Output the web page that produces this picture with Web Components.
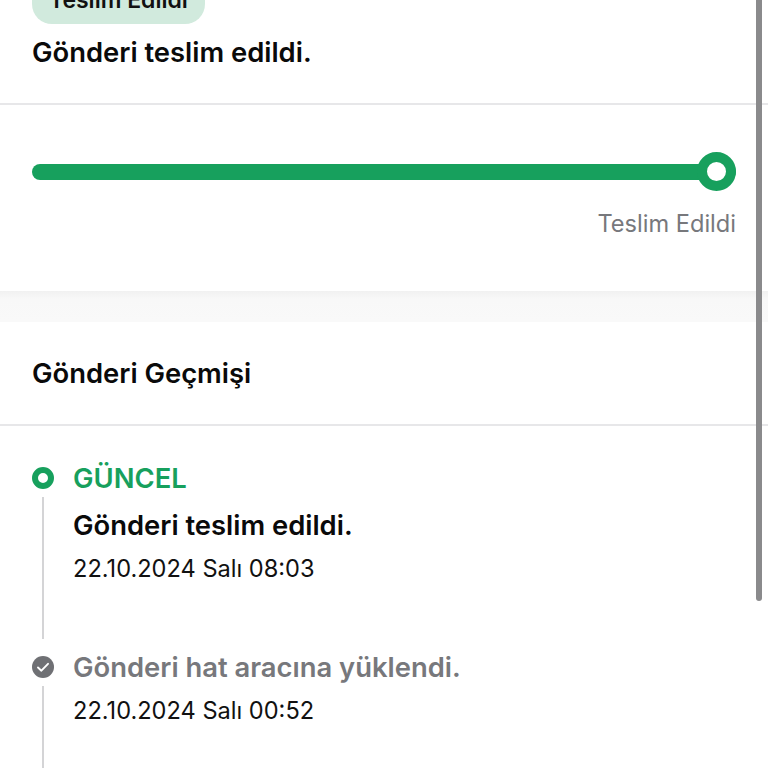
<!DOCTYPE html>
<html lang="tr">
<head>
<meta charset="utf-8">
<title>Gönderi Takip</title>
<style>
  html, body { margin: 0; height: 768px; overflow: hidden; background: #fff; font-family: Inter, "Liberation Sans", sans-serif; }
</style>
</head>
<body>
<tracking-page>
  <status-summary status="Teslim Edildi" message="Gönderi teslim edildi."></status-summary>
  <progress-track label="Teslim Edildi"></progress-track>
  <history-panel title="Gönderi Geçmişi">
    <history-item current label="GÜNCEL" title="Gönderi teslim edildi." date="22.10.2024 Salı 08:03"></history-item>
    <history-item title="Gönderi hat aracına yüklendi." date="22.10.2024 Salı 00:52"></history-item>
  </history-panel>
</tracking-page>

<script>
class TrackingPage extends HTMLElement {
  constructor() {
    super()
    this.attachShadow({ mode: 'open' })
  }
  connectedCallback() {
    this.shadowRoot.innerHTML = `
      <style>
        :host { display: block; position: relative; height: 768px; overflow: hidden; }
        .content { display: flex; flex-direction: column; margin-top: -24px; }
        .scrollbar { position: absolute; top: 0; right: 6px; width: 6px; height: 601px; background: #8a8a8c; border-radius: 0 0 3px 3px; }
      </style>
      <div class="content"><slot></slot></div>
      <div class="scrollbar"></div>
    `
  }
}

class StatusSummary extends HTMLElement {
  constructor() {
    super()
    this.attachShadow({ mode: 'open' })
  }
  connectedCallback() {
    this.shadowRoot.innerHTML = `
      <style>
        :host { display: block; padding: 0 32px 33px; border-bottom: 2px solid #e7e7e9; }
        .badge { display: inline-block; height: 48px; line-height: 48px; padding: 0 17px; box-sizing: border-box; background: #d1eadd; border-radius: 0 0 20px 20px; font-size: 23px; font-weight: 600; color: #111; }
        .head { height: 48px; }
        .message { margin-top: 10px; font-size: 27.4px; line-height: 36px; font-weight: 600; color: #0a0a0a; }
      </style>
      <div class="head"><span class="badge">${this.getAttribute('status')}</span></div>
      <div class="message">${this.getAttribute('message')}</div>
    `
  }
}

class ProgressTrack extends HTMLElement {
  constructor() {
    super()
    this.attachShadow({ mode: 'open' })
  }
  connectedCallback() {
    this.shadowRoot.innerHTML = `
      <style>
        :host { display: block; height: 186px; box-sizing: border-box; padding: 59px 32px 0; }
        .bar { position: relative; height: 16px; background: #17a05d; border-radius: 8px; }
        .knob { position: absolute; right: 0; top: -12px; width: 39px; height: 39px; box-sizing: border-box; border: 10px solid #17a05d; border-radius: 50%; background: #fff; }
        .label { margin-top: 29px; text-align: right; font-size: 23.6px; line-height: 30px; color: #77787c; }
      </style>
      <div class="bar"><div class="knob"></div></div>
      <div class="label">${this.getAttribute('label')}</div>
    `
  }
}

class HistoryPanel extends HTMLElement {
  constructor() {
    super()
    this.attachShadow({ mode: 'open' })
  }
  connectedCallback() {
    this.shadowRoot.innerHTML = `
      <style>
        :host { display: block; }
        .gap { height: 31px; background: linear-gradient(#f1f1f1, #f8f8f8 8px, #f9f9f9); }
        h2 { margin: 0; height: 104px; box-sizing: border-box; padding: 0 32px; display: flex; align-items: center; border-bottom: 2px solid #e7e7e9; font-size: 27.4px; font-weight: 600; color: #0a0a0a; }
        .list { padding: 37px 32px 0; display: flex; flex-direction: column; }
      </style>
      <div class="gap"></div>
      <h2>${this.getAttribute('title')}</h2>
      <div class="list"><slot></slot></div>
    `
  }
}

class HistoryItem extends HTMLElement {
  constructor() {
    super()
    this.attachShadow({ mode: 'open' })
  }
  connectedCallback() {
    const current = this.hasAttribute('current')
    const icon = current
      ? `<svg width="22" height="22" viewBox="0 0 22 22"><circle cx="11" cy="11" r="8" fill="#fff" stroke="#17a05d" stroke-width="6"/></svg>`
      : `<svg width="22" height="22" viewBox="0 0 22 22"><circle cx="11" cy="11" r="11" fill="#6f7074"/><path d="M6 11.5l3.4 3.2L16 7.8" fill="none" stroke="#fff" stroke-width="1.9" stroke-linecap="round" stroke-linejoin="round"/></svg>`
    this.shadowRoot.innerHTML = `
      <style>
        :host { display: grid; grid-template-columns: 22px 1fr; column-gap: 19px; height: 189px; }
        :host(:not([current])) { height: 130px; }
        .rail { display: flex; flex-direction: column; align-items: center; }
        .line { flex: 1; width: 2px; margin: 8px 0 13px; background: #d4d4d6; }
        :host(:not([current])) .line { margin-bottom: 0; }
        .rail svg { display: block; margin-top: 4px; flex: none; }
        .label { font-size: 27.4px; line-height: 30px; font-weight: 600; color: #17a05d; }
        .title { font-size: 27.4px; line-height: 36px; font-weight: 600; color: #0a0a0a; margin-top: 14px; }
        .date { font-size: 23.6px; line-height: 30px; color: #111; margin-top: 11px; }
        :host(:not([current])) .title { color: #77787c; margin-top: -3px; }
      </style>
      <div class="rail">${icon}<div class="line"></div></div>
      <div>
        ${current ? `<div class="label">${this.getAttribute('label')}</div>` : ''}
        <div class="title">${this.getAttribute('title')}</div>
        <div class="date">${this.getAttribute('date')}</div>
      </div>
    `
  }
}

customElements.define('tracking-page', TrackingPage)
customElements.define('status-summary', StatusSummary)
customElements.define('progress-track', ProgressTrack)
customElements.define('history-panel', HistoryPanel)
customElements.define('history-item', HistoryItem)
</script>
</body>
</html>
